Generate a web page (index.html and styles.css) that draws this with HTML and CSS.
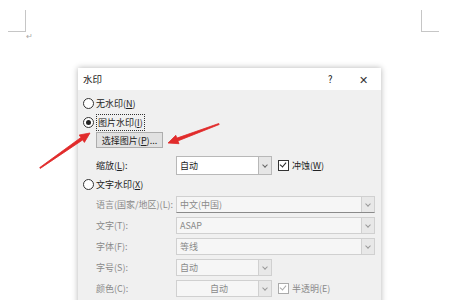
FILE: index.html
```html
<!DOCTYPE html>
<html>
<head>
    <title>水印</title>
    <link rel="stylesheet" href="styles.css">
</head>
<body>
    <div class="page">
        <div class="marks">
            <div class="corner left"><span class="ret">↵</span></div>
            <div class="corner right"></div>
        </div>
        <div class="dialog">
            <div class="titlebar">
                <span class="title">水印</span>
                <span class="help">?</span>
                <span class="close">✕</span>
            </div>
            <div class="body">
                <div class="radio-row"><span class="radio"></span>无水印(<u>N</u>)</div>
                <div class="radio-row"><span class="radio on"></span><span class="focus">图片水印(<u>I</u>)</span></div>
                <button class="btn">选择图片(<u>P</u>)...</button>
                <div class="row scale">
                    <span class="label">缩放(<u>L</u>):</span>
                    <div class="select short"><span class="val">自动</span><span class="arrow"></span></div>
                    <span class="check on"></span><span>冲蚀(<u>W</u>)</span>
                </div>
                <div class="radio-row"><span class="radio"></span>文字水印(<u>X</u>)</div>
                <div class="fields">
                    <div class="row dis">
                        <span class="label">语言(国家/地区)(L):</span>
                        <div class="select long underline"><span class="val">中文(中国)</span><span class="arrow"></span></div>
                    </div>
                    <div class="row dis">
                        <span class="label">文字(T):</span>
                        <div class="select long"><span class="val">ASAP</span><span class="arrow"></span></div>
                    </div>
                    <div class="row dis">
                        <span class="label">字体(F):</span>
                        <div class="select long"><span class="val">等线</span><span class="arrow"></span></div>
                    </div>
                    <div class="row dis">
                        <span class="label">字号(S):</span>
                        <div class="select short"><span class="val">自动</span><span class="arrow"></span></div>
                    </div>
                    <div class="row dis">
                        <span class="label">颜色(C):</span>
                        <div class="select short"><span class="val center">自动</span><span class="arrow"></span></div>
                        <span class="check on"></span><span>半透明(E)</span>
                    </div>
                </div>
            </div>
        </div>
        <svg class="arrows" width="450" height="300" viewBox="0 0 450 300">
            <polygon points="39.7,167.6 80.9,137.5 79.2,135.0 90,133 84.4,142.4 82.7,139.9 40.3,168.4" fill="#e12b2b" stroke="#e12b2b" stroke-width="0.8" stroke-linejoin="round"/>
            <polygon points="218.8,123.5 176.9,138.1 175.8,135.3 168,143 179.0,143.7 177.9,140.9 219.2,124.5" fill="#e12b2b" stroke="#e12b2b" stroke-width="0.8" stroke-linejoin="round"/>
        </svg>
    </div>
</body>
</html>
```

FILE: styles.css
```css
body {
    margin: 0;
    background-color: #fff;
    font-family: "Noto Sans CJK SC", "Noto Sans", sans-serif;
    font-size: 9px;
    color: #222;
    overflow: hidden;
}
.page {
    position: relative;
    width: 450px;
    height: 300px;
}
.marks {
    display: flex;
    justify-content: space-between;
    padding: 10px 11px 0 8px;
    height: 58px;
    box-sizing: border-box;
}
.corner {
    width: 17px;
    height: 21px;
    border-bottom: 1px solid #c6c6c6;
    position: relative;
}
.corner.left {
    border-right: 1px solid #c6c6c6;
}
.corner.right {
    border-left: 1px solid #c6c6c6;
}
.ret {
    position: absolute;
    left: 18px;
    top: 22px;
    font-size: 8px;
    line-height: 8px;
    color: #a8a8a8;
}
.dialog {
    margin-left: 78px;
    width: 303px;
    height: 240px;
    background-color: #f0f0f0;
    box-shadow: 0 0 6px rgba(0, 0, 0, 0.3);
    margin-top: 10px;
}
.titlebar {
    display: flex;
    align-items: center;
    height: 22px;
    background-color: #fff;
    padding-left: 5px;
    font-size: 9.5px;
    color: #111;
}
.title {
    flex: 1;
}
.help {
    width: 10px;
    margin-right: 21px;
}
.close {
    width: 12px;
    margin-right: 10px;
    font-size: 11px;
    color: #333;
}
.body {
    padding: 4px 0 0 5px;
}
.radio-row {
    display: flex;
    align-items: center;
    height: 19px;
}
.radio {
    width: 9px;
    height: 9px;
    border: 1px solid #333;
    border-radius: 50%;
    background-color: #fff;
    margin-right: 2px;
    box-sizing: content-box;
    position: relative;
}
.radio.on::after {
    content: "";
    position: absolute;
    left: 2px;
    top: 2px;
    width: 5px;
    height: 5px;
    border-radius: 50%;
    background-color: #222;
}
.focus {
    border: 1px dotted #333;
    padding: 1px 1px;
}
.btn {
    display: block;
    margin: 0 0 0 13px;
    width: 67px;
    height: 16px;
    padding: 0;
    border: 1px solid #adadad;
    background-color: #e1e1e1;
    font-family: inherit;
    font-size: 9px;
    color: #222;
}
.row {
    display: flex;
    align-items: center;
    height: 17px;
    padding-left: 13px;
}
.row.scale {
    height: 19px;
    margin-top: 8px;
}
.label {
    width: 80px;
}
.select {
    display: flex;
    height: 100%;
    box-sizing: border-box;
    border: 1px solid #b8b8b8;
    background-color: #fff;
}
.select.short {
    width: 96px;
}
.select.long {
    width: 199px;
}
.val {
    flex: 1;
    padding-left: 3px;
    line-height: 15px;
}
.scale .val {
    line-height: 17px;
}
.val.center {
    text-align: center;
}
.arrow {
    width: 12px;
    border-left: 1px solid #b8b8b8;
    background-color: #e6e6e6;
    position: relative;
}
.arrow::after {
    content: "";
    position: absolute;
    left: 4px;
    top: 50%;
    width: 3px;
    height: 3px;
    margin-top: -3px;
    border-right: 1px solid #666;
    border-bottom: 1px solid #666;
    transform: rotate(45deg);
}
.check {
    width: 9px;
    height: 9px;
    border: 1px solid #333;
    background-color: #fff;
    margin: 0 3px 0 6px;
    position: relative;
}
.check.on::after {
    content: "";
    position: absolute;
    left: 2px;
    top: 0;
    width: 3px;
    height: 5px;
    border-right: 1px solid #222;
    border-bottom: 1px solid #222;
    transform: rotate(40deg);
}
.fields {
    display: flex;
    flex-direction: column;
    gap: 4px;
    margin-top: 2px;
}
.dis {
    color: #8a8a8a;
}
.dis .select {
    background-color: #f6f6f6;
    border-color: #d0d0d0;
}
.dis .select.underline {
    border-bottom: 1px solid #8a8a8a;
}
.dis .arrow {
    border-left-color: #d0d0d0;
    background-color: #e8e8e8;
}
.dis .arrow::after {
    border-color: #999;
}
.dis .check {
    border-color: #aaa;
}
.dis .check.on::after {
    border-color: #aaa;
}
.arrows {
    position: absolute;
    left: 0;
    top: 0;
    pointer-events: none;
}
```
